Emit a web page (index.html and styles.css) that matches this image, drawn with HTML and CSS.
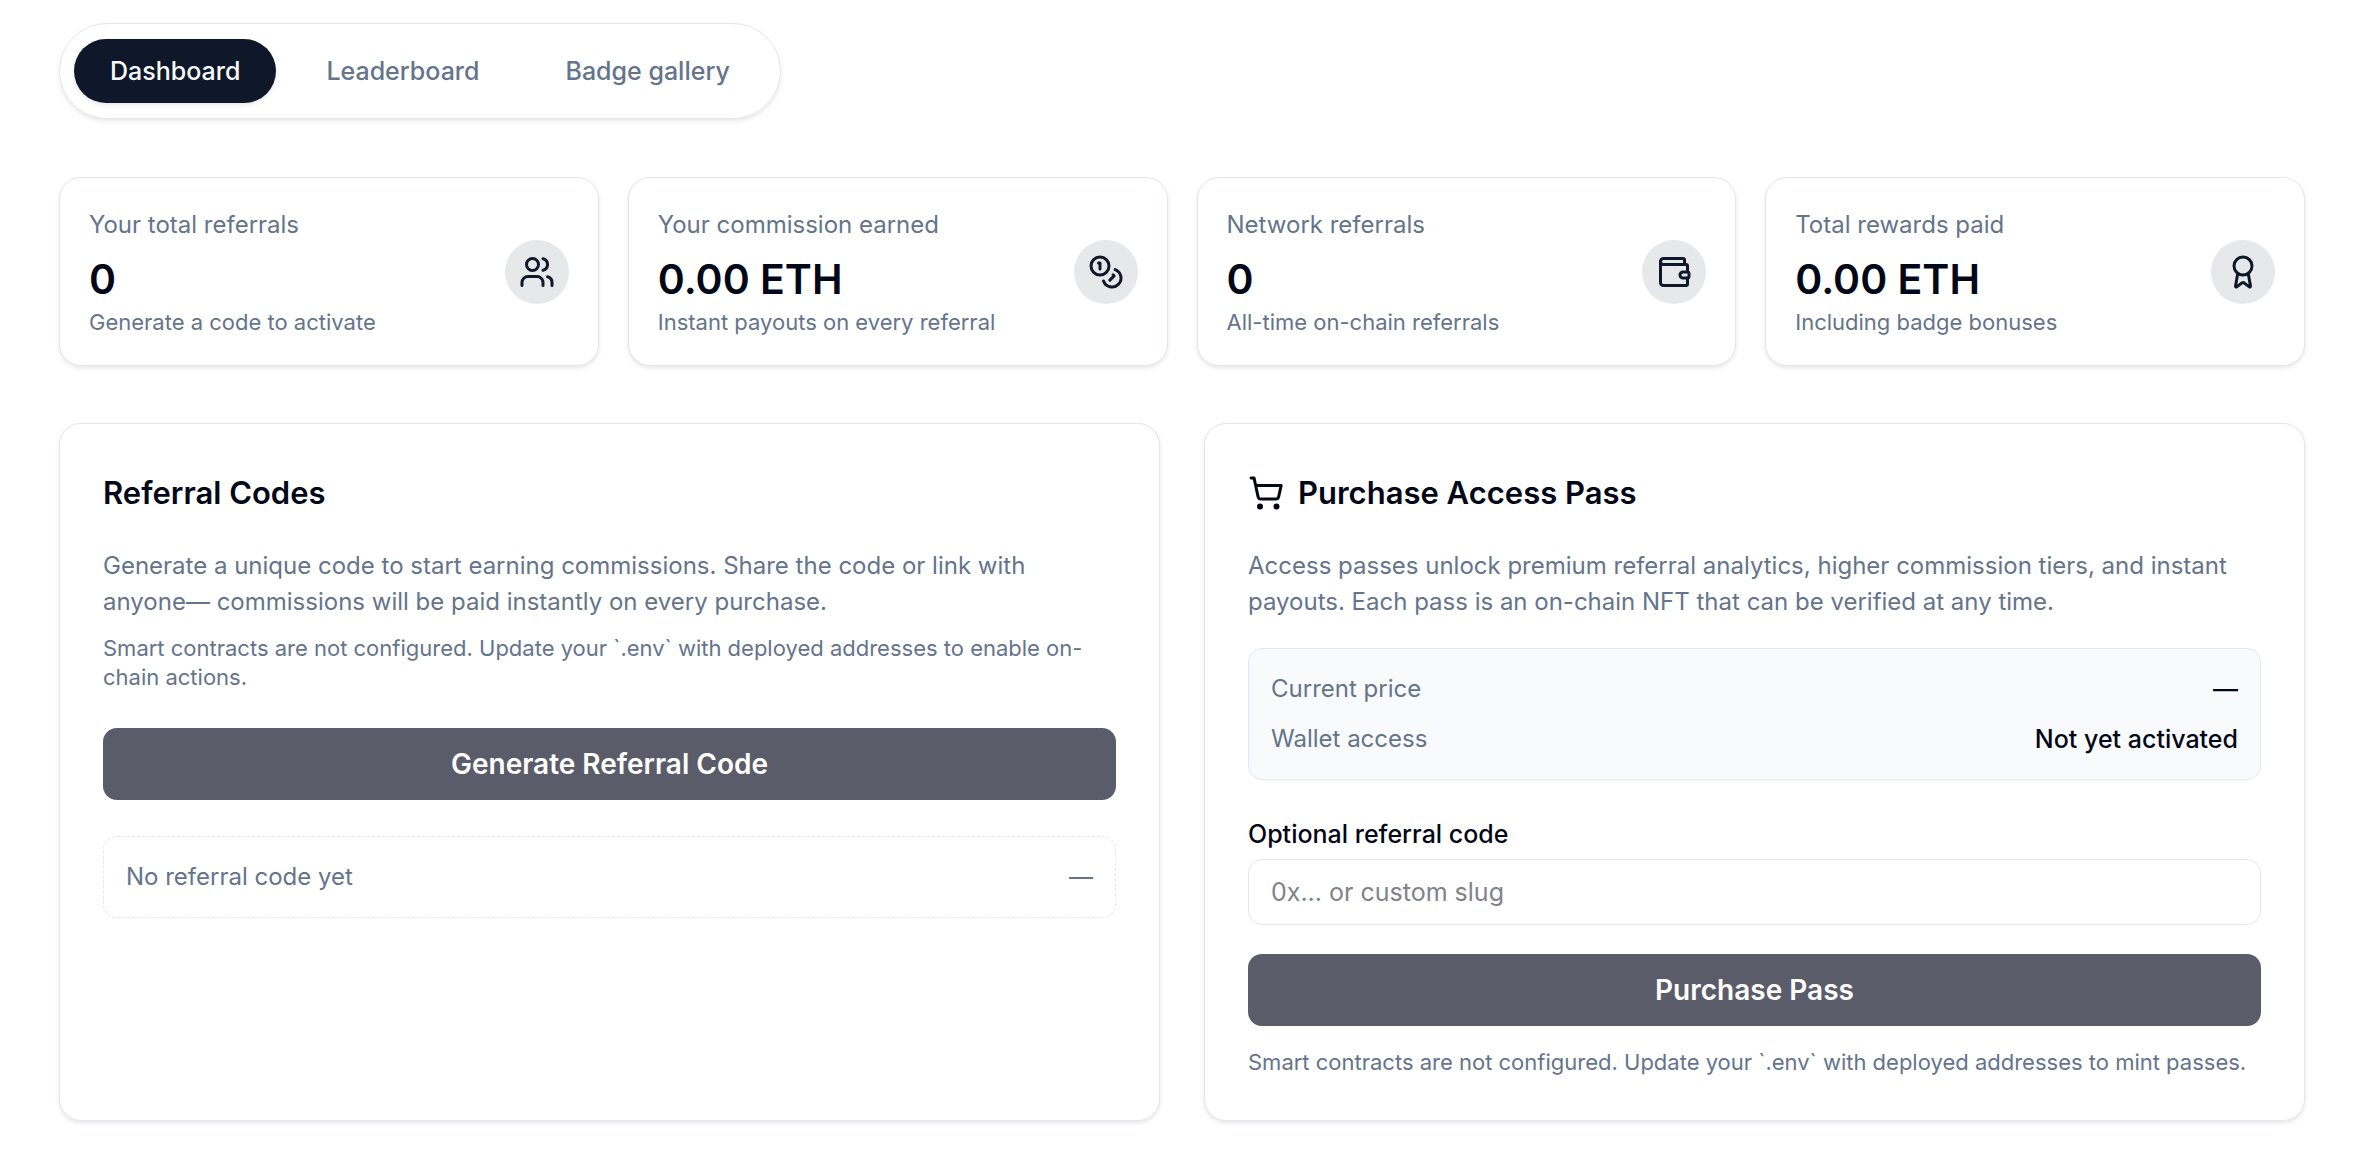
FILE: index.html
```html
<!DOCTYPE html>
<html lang="en">
<head>
    <meta charset="UTF-8">
    <meta name="viewport" content="width=device-width, initial-scale=1.0">
    <title>Referral Dashboard</title>

    <link rel="stylesheet" href="styles.css">
</head>
<body>
    <main class="page">
        <nav class="tabs">
            <button type="button" class="tab active">Dashboard</button>
            <button type="button" class="tab">Leaderboard</button>
            <button type="button" class="tab">Badge gallery</button>
        </nav>

        <!-- Stats -->
        <section class="stats">
            <div class="card stat">
                <div>
                    <p class="stat-label">Your total referrals</p>
                    <p class="stat-value">0</p>
                    <p class="note">Generate a code to activate</p>
                </div>
                <span class="stat-icon">
                    <svg class="icon" viewBox="0 0 24 24">
                        <path d="M16 21v-2a4 4 0 0 0-4-4H6a4 4 0 0 0-4 4v2"/>
                        <circle cx="9" cy="7" r="4"/>
                        <path d="M22 21v-2a4 4 0 0 0-3-3.87"/>
                        <path d="M16 3.13a4 4 0 0 1 0 7.75"/>
                    </svg>
                </span>
            </div>

            <div class="card stat">
                <div>
                    <p class="stat-label">Your commission earned</p>
                    <p class="stat-value">0.00 ETH</p>
                    <p class="note">Instant payouts on every referral</p>
                </div>
                <span class="stat-icon">
                    <svg class="icon" viewBox="0 0 24 24">
                        <circle cx="8" cy="8" r="6"/>
                        <path d="M18.09 10.37A6 6 0 1 1 10.34 18"/>
                        <path d="M7 6h1v4"/>
                        <path d="m16.71 13.88.7.71-2.82 2.82"/>
                    </svg>
                </span>
            </div>

            <div class="card stat">
                <div>
                    <p class="stat-label">Network referrals</p>
                    <p class="stat-value">0</p>
                    <p class="note">All-time on-chain referrals</p>
                </div>
                <span class="stat-icon">
                    <svg class="icon" viewBox="0 0 24 24">
                        <path d="M19 7V4a1 1 0 0 0-1-1H5a2 2 0 0 0 0 4h15a1 1 0 0 1 1 1v4h-3a2 2 0 0 0 0 4h3a1 1 0 0 0 1-1v-2a1 1 0 0 0-1-1"/>
                        <path d="M3 5v14a2 2 0 0 0 2 2h15a1 1 0 0 0 1-1v-4"/>
                    </svg>
                </span>
            </div>

            <div class="card stat">
                <div>
                    <p class="stat-label">Total rewards paid</p>
                    <p class="stat-value">0.00 ETH</p>
                    <p class="note">Including badge bonuses</p>
                </div>
                <span class="stat-icon">
                    <svg class="icon" viewBox="0 0 24 24">
                        <path d="m15.477 12.89 1.515 8.526a.5.5 0 0 1-.81.47l-3.58-2.687a1 1 0 0 0-1.197 0l-3.586 2.686a.5.5 0 0 1-.81-.469l1.514-8.526"/>
                        <circle cx="12" cy="8" r="6"/>
                    </svg>
                </span>
            </div>
        </section>

        <section class="panels">
            <!-- Referral codes -->
            <div class="card panel">
                <h2 class="panel-title">Referral Codes</h2>
                <p class="panel-text">Generate a unique code to start earning commissions. Share the code or link with <span class="nowrap">anyone—</span> commissions will be paid instantly on every purchase.</p>
                <p class="note code-note">Smart contracts are not configured. Update your `.env` with deployed addresses to enable on-chain actions.</p>
                <button type="button" class="btn generate">Generate Referral Code</button>
                <div class="empty-code">
                    <span>No referral code yet</span>
                    <span>—</span>
                </div>
            </div>

            <!-- Purchase pass -->
            <div class="card panel">
                <h2 class="panel-title">
                    <svg class="icon" viewBox="0 0 24 24">
                        <circle cx="8" cy="21" r="1"/>
                        <circle cx="19" cy="21" r="1"/>
                        <path d="M2.05 2.05h2l2.66 12.42a2 2 0 0 0 2 1.58h9.78a2 2 0 0 0 1.95-1.57l1.65-7.43H5.12"/>
                    </svg>
                    Purchase Access Pass
                </h2>
                <p class="panel-text">Access passes unlock premium referral analytics, higher commission tiers, and instant payouts. Each pass is an on-chain NFT that can be verified at any time.</p>
                <dl class="summary">
                    <div class="summary-row">
                        <dt>Current price</dt>
                        <dd>—</dd>
                    </div>
                    <div class="summary-row">
                        <dt>Wallet access</dt>
                        <dd>Not yet activated</dd>
                    </div>
                </dl>
                <form class="purchase-form">
                    <label for="referral-code">Optional referral code</label>
                    <input type="text" id="referral-code" placeholder="0x... or custom slug">
                    <button type="button" class="btn">Purchase Pass</button>
                </form>
                <p class="note purchase-note">Smart contracts are not configured. Update your `.env` with deployed addresses to mint passes.</p>
            </div>
        </section>
    </main>
</body>
</html>
```
FILE: styles.css
```css
* {
    box-sizing: border-box;
}

body {
    margin: 0;
    font-family: Inter, "Liberation Sans", sans-serif;
    font-size: 24px;
    line-height: 36px;
    color: #020817;
    background-color: #fff;
}

h2, p, dl, dd {
    margin: 0;
}

button, input {
    font: inherit;
}

.page {
    padding: 23px 71px 40px 59px;
}

.nowrap {
    white-space: nowrap;
}

.card {
    background-color: #fff;
    border: 1px solid #e2e8f0;
    border-radius: 22px;
    box-shadow: 0 2px 4px rgba(0, 0, 0, 0.1);
}

.icon {
    width: 36px;
    height: 36px;
    flex-shrink: 0;
    fill: none;
    stroke: currentColor;
    stroke-width: 2;
    stroke-linecap: round;
    stroke-linejoin: round;
}

.note {
    font-size: 22px;
    line-height: 29px;
    color: #64748b;
}

/* Tabs */
.tabs {
    display: inline-flex;
    gap: 14px;
    padding: 15px 14px;
    border: 1px solid #e2e8f0;
    border-radius: 48px;
    box-shadow: 0 2px 4px rgba(0, 0, 0, 0.1);
}

.tab {
    padding: 14px 36px;
    border: none;
    border-radius: 32px;
    background: none;
    color: #64748b;
    font-size: 25px;
    font-weight: 500;
    cursor: pointer;
}

.tab.active {
    background-color: #0f172a;
    color: #f8fafc;
    box-shadow: 0 2px 4px rgba(0, 0, 0, 0.1);
}

/* Stats */
.stats {
    display: grid;
    grid-template-columns: repeat(4, 1fr);
    gap: 29px;
    margin-top: 58px;
}

.stat {
    display: flex;
    align-items: center;
    justify-content: space-between;
    padding: 29px 29px 28px;
}

.stat-label {
    color: #64748b;
}

.stat-value {
    margin-top: 7px;
    font-size: 41px;
    font-weight: 600;
    line-height: 58px;
}

.stat-icon {
    display: flex;
    padding: 14px;
    border-radius: 50%;
    background-color: #e7e8ea;
    color: #0f172a;
}

/* Panels */
.panels {
    display: grid;
    grid-template-columns: 1fr 1fr;
    gap: 44px;
    margin-top: 57px;
}

.panel {
    padding: 43px;
}

.panel-title {
    display: flex;
    align-items: center;
    gap: 14px;
    font-size: 31px;
    font-weight: 600;
    line-height: 52px;
}

.panel-text {
    margin-top: 29px;
    color: #64748b;
}

.code-note {
    margin-top: 14px;
}

.btn {
    display: block;
    width: 100%;
    padding: 18px;
    border: none;
    border-radius: 14px;
    background-color: #5a5d69;
    color: #fff;
    font-size: 28px;
    font-weight: 600;
    cursor: pointer;
}

.generate {
    margin: 36px 0;
}

.empty-code {
    display: flex;
    justify-content: space-between;
    padding: 22px;
    border: 1px dashed #e2e8f0;
    border-radius: 14px;
    color: #64748b;
}

.summary {
    display: grid;
    gap: 14px;
    margin-top: 28px;
    padding: 22px;
    border: 1px solid #e2e8f0;
    border-radius: 14px;
    background-color: #f9fafc;
}

.summary-row {
    display: flex;
    justify-content: space-between;
}

.summary dt {
    color: #64748b;
}

.summary dd {
    font-size: 25px;
    font-weight: 500;
}

.purchase-form {
    margin-top: 36px;
}

.purchase-form label {
    display: block;
    margin-bottom: 7px;
    font-size: 25px;
    font-weight: 500;
}

.purchase-form input {
    display: block;
    width: 100%;
    margin-bottom: 29px;
    padding: 14px 22px;
    border: 1px solid #e2e8f0;
    border-radius: 14px;
    background-color: #fff;
    color: #020817;
    font-size: 25px;
}

.purchase-form input::placeholder {
    color: #808389;
}

.purchase-note {
    margin-top: 22px;
}
```
